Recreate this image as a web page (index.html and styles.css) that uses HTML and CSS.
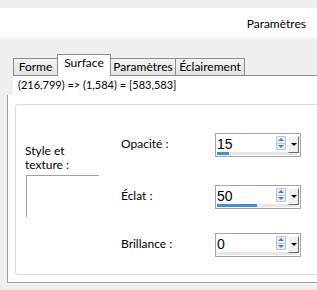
FILE: index.html
```html
<!DOCTYPE html>
<html lang="fr">
<head>
  <meta charset="UTF-8">
  <title>Paramètres</title>
  <link rel="stylesheet" href="styles.css">
</head>
<body>
  <!-- Title strip -->
  <div class="titlebar"><span>Paramètres</span></div>

  <!-- Tabs -->
  <div class="tabs">
    <div class="tab tab-forme">Forme</div>
    <div class="tab tab-surface active">Surface</div>
    <div class="tab tab-params">Paramètres</div>
    <div class="tab tab-light">Éclairement</div>
  </div>

  <div class="page">
    <div class="coords">(216,799) =&gt; (1,584) = [583,583]</div>
    <div class="frame">
      <div class="group">
        <div class="texture">
          <div class="texture-label">Style et</div>
          <div class="texture-label">texture :</div>
          <div class="texture-box"></div>
        </div>
        <div class="fields">
          <div class="field">
            <span class="field-label">Opacité :</span>
            <div class="spin">
              <div class="spin-value">15</div>
              <div class="spin-arrows"><span class="up"></span><span class="down"></span></div>
              <div class="spin-drop"></div>
              <div class="spin-track"><div class="spin-fill" style="width:15%"></div></div>
            </div>
          </div>
          <div class="field">
            <span class="field-label">Éclat :</span>
            <div class="spin">
              <div class="spin-value">50</div>
              <div class="spin-arrows"><span class="up"></span><span class="down"></span></div>
              <div class="spin-drop"></div>
              <div class="spin-track"><div class="spin-fill" style="width:50%"></div></div>
            </div>
          </div>
          <div class="field">
            <span class="field-label">Brillance :</span>
            <div class="spin">
              <div class="spin-value">0</div>
              <div class="spin-arrows"><span class="up"></span><span class="down"></span></div>
              <div class="spin-drop"></div>
              <div class="spin-track"><div class="spin-fill" style="width:0%"></div></div>
            </div>
          </div>
        </div>
      </div>
    </div>
  </div>
</body>
</html>
```

FILE: styles.css
```css
html, body {
  margin: 0;
  padding: 0;
}
body {
  width: 317px;
  height: 290px;
  overflow: hidden;
  background: #f0f0f0;
  font-family: 'Lato', 'Segoe UI', sans-serif;
  font-size: 12px;
  color: #000;
}
/* Title strip */
.titlebar {
  margin-top: 8px;
  height: 30px;
  background: #fff;
  display: flex;
  align-items: center;
  justify-content: flex-end;
  padding-right: 11px;
}
/* Tabs */
.tabs {
  margin-top: 16px;
  padding-left: 13px;
  height: 21px;
  display: flex;
  align-items: flex-end;
}
.tab {
  box-sizing: border-box;
  height: 17px;
  line-height: 16px;
  text-align: center;
  white-space: nowrap;
  border: 1px solid #898c95;
  border-bottom: none;
  background: linear-gradient(#f3f3f3, #e3e3e3);
}
.tab-forme { width: 44px; border-right: none; }
.tab-surface { width: 54px; }
.tab-params { width: 65px; border-left: none; }
.tab-light { width: 69px; border-left: none; }
.tab.active {
  height: 22px;
  line-height: 16px;
  background: #fff;
  margin-bottom: -1px;
  position: relative;
}
/* Page */
.page {
  margin-left: 13px;
  border-top: 1px solid #898c95;
  background: #fff;
}
.coords {
  height: 19px;
  line-height: 17px;
  padding-left: 5px;
  font-size: 11px;
}
.frame {
  margin-left: -6px;
  border-left: 1px solid #a0a0a0;
  border-bottom: 1px solid #a0a0a0;
  background: #fff;
  padding: 9px 0 7px 7px;
}
.group {
  height: 169px;
  border: 1px solid #dcdcdc;
  border-right: none;
  border-radius: 3px 0 0 3px;
  display: flex;
}
/* Texture */
.texture {
  margin: 39px 0 0 9px;
  width: 74px;
}
.texture-label {
  line-height: 14px;
  white-space: nowrap;
}
.texture-box {
  margin: 3px 0 0 1px;
  height: 41px;
  border-top: 1px solid #a0a0a0;
  border-left: 1px solid #a0a0a0;
}
/* Fields */
.fields {
  margin: 28px 0 0 22px;
  display: flex;
  flex-direction: column;
}
.field {
  display: flex;
  align-items: center;
}
.field + .field {
  margin-top: 28px;
}
.field:last-child {
  margin-top: 24px;
}
.field-label {
  width: 94px;
  margin-top: -4px;
}
.spin {
  position: relative;
  width: 84px;
  height: 20px;
  padding-top: 2px;
  border: 1px solid #a5a5a5;
  display: flex;
}
.spin-value {
  flex: 1;
  padding-left: 1px;
  font-family: 'Liberation Sans', Arial, sans-serif;
  font-size: 14px;
  line-height: 16px;
}
.spin-arrows {
  width: 10px;
  height: 14px;
  display: flex;
  flex-direction: column;
  margin-right: 2px;
  position: relative;
  z-index: 1;
}
.spin-arrows span {
  flex: 1;
  background: #e8eef6;
  border: 1px solid #b9c9da;
  display: flex;
  align-items: center;
  justify-content: center;
}
.spin-arrows .up { border-bottom: none; }
.spin-arrows .up::after {
  content: '';
  border-left: 3px solid transparent;
  border-right: 3px solid transparent;
  border-bottom: 3px solid #4f7fb3;
}
.spin-arrows .down::after {
  content: '';
  border-left: 3px solid transparent;
  border-right: 3px solid transparent;
  border-top: 3px solid #4f7fb3;
}
.spin-drop {
  width: 9px;
  height: 15px;
  margin-right: 1px;
  background: #f0f0f0;
  border-top: 1px solid #fff;
  border-left: 1px solid #fff;
  border-right: 1px solid #6a6a6a;
  border-bottom: 1px solid #6a6a6a;
  display: flex;
  align-items: center;
  justify-content: center;
  position: relative;
  z-index: 1;
}
.spin-drop::after {
  content: '';
  border-left: 3px solid transparent;
  border-right: 3px solid transparent;
  border-top: 3px solid #000;
}
.spin-track {
  position: absolute;
  left: 1px;
  bottom: 1px;
  width: 80px;
  height: 3px;
  background: #e6e6e6;
}
.spin-fill {
  height: 100%;
  background: #3d8ee5;
}
```
